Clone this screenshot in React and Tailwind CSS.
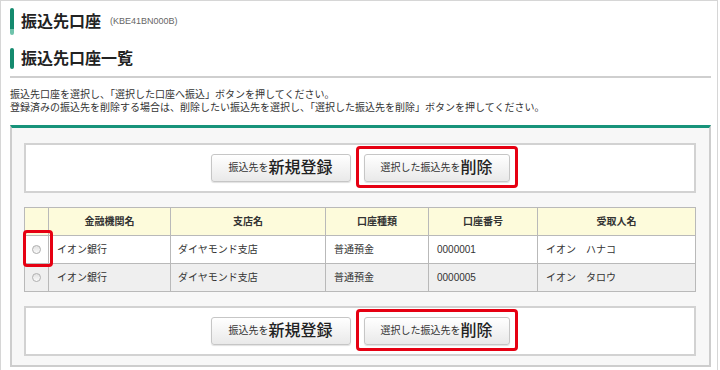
import React from "react"

const font = { fontFamily: '"Liberation Sans", "Noto Sans CJK JP", sans-serif' }

const rows = [
  { bank: "イオン銀行", branch: "ダイヤモンド支店", type: "普通預金", num: "0000001", name: "イオン　ハナコ", marked: true },
  { bank: "イオン銀行", branch: "ダイヤモンド支店", type: "普通預金", num: "0000005", name: "イオン　タロウ", marked: false },
]

const Radio = () => (
  <span className="inline-block w-[9px] h-[9px] rounded-full border border-[#b0b0b0] bg-[linear-gradient(to_bottom,#e2e2e2,#fafafa)]" />
)

const ButtonBox = () => (
  <div className="border-2 border-[#d2d2d2] bg-white h-[50px] flex items-center justify-center gap-[13px]">
    <button className="w-[140px] h-[28px] flex items-center justify-center rounded-[3px] border border-[#c6c6c6] bg-[linear-gradient(to_bottom,#ffffff,#e9e9e9)] shadow-[0_1px_1px_rgba(0,0,0,0.12)] text-[#333]">
      <span className="text-[10px] leading-none">振込先を</span>
      <span className="text-[16px] leading-none font-medium text-[#222]">新規登録</span>
    </button>
    <div className="relative">
      <button className="w-[146px] h-[28px] flex items-center justify-center rounded-[3px] border border-[#c6c6c6] bg-[linear-gradient(to_bottom,#ffffff,#e9e9e9)] shadow-[0_1px_1px_rgba(0,0,0,0.12)] text-[#333]">
        <span className="text-[10px] leading-none">選択した振込先を</span>
        <span className="text-[16px] leading-none font-medium text-[#222]">削除</span>
      </button>
      <div className="absolute -left-[8px] -right-[8px] -top-[8px] -bottom-[6px] border-[3px] border-[#e60012] rounded-[4px]" />
    </div>
  </div>
)

export default function App() {
  return (
    <div className="w-[720px] h-[370px] overflow-hidden bg-white text-[#333]" style={font}>
      <div className="w-[718px] h-[400px] border border-[#d6d6d6] pl-[9px] pr-[6px] pt-[7px]">
        {/* Page title */}
        <div className="flex items-center h-[27px]">
          <div className="w-[4px] h-[27px] rounded-[2px] bg-[linear-gradient(to_bottom,#148a6e_78%,#6fc3ab_78%)]" />
          <h1 className="ml-[7px] text-[16px] font-bold leading-none text-[#222]">振込先口座</h1>
          <span className="ml-[9px] text-[9px] text-[#666] leading-none">(KBE41BN000B)</span>
        </div>

        {/* Section title */}
        <div className="flex items-center h-[21px] mt-[13px]">
          <div className="w-[4px] h-[21px] rounded-[2px] bg-[#148a6e]" />
          <h2 className="ml-[7px] text-[16px] font-bold leading-none text-[#222]">振込先口座一覧</h2>
        </div>
        <div className="mt-[7px] h-[2px] bg-[#cfcfcf]" />

        <div className="mt-[10px] text-[10px] leading-[13px] text-[#333]">
          <p>振込先口座を選択し、「選択した口座へ振込」ボタンを押してください。</p>
          <p>登録済みの振込先を削除する場合は、削除したい振込先を選択し、「選択した振込先を削除」ボタンを押してください。</p>
        </div>

        {/* Panel */}
        <div className="mt-[11px] border-t-[3px] border-t-[#17937a] border-x-2 border-b-2 border-x-[#cdcdcd] border-b-[#cdcdcd] bg-[#f7f7f7] pl-[12px] pr-[13px] pt-[15px] pb-[9px]">
          <ButtonBox />

          <table className="mt-[14px] w-full border-collapse text-[10px] table-fixed">
            <colgroup>
              <col className="w-[24px]" />
              <col className="w-[122px]" />
              <col className="w-[155px]" />
              <col className="w-[103px]" />
              <col className="w-[109px]" />
              <col className="w-[158px]" />
            </colgroup>
            <thead>
              <tr className="h-[28px] bg-[#fdfbdb]">
                <th className="border border-[#b9b9b9]" />
                {["金融機関名", "支店名", "口座種類", "口座番号", "受取人名"].map((h) => (
                  <th key={h} className="border border-[#b9b9b9] font-bold text-center text-[#333]">
                    {h}
                  </th>
                ))}
              </tr>
            </thead>
            <tbody>
              {rows.map((r, i) => (
                <tr key={i} className={`h-[28px] ${i === 1 ? "bg-[#efefef]" : "bg-white"}`}>
                  <td className="relative border border-[#b9b9b9] text-center align-middle">
                    <div className="flex items-center justify-center">
                      <Radio />
                    </div>
                    {r.marked && (
                      <div className="absolute -left-[2px] -right-[5px] -top-[6px] -bottom-[4px] border-[3px] border-[#e60012] rounded-[4px]" />
                    )}
                  </td>
                  <td className="border border-[#b9b9b9] pl-[8px]">{r.bank}</td>
                  <td className="border border-[#b9b9b9] pl-[7px]">{r.branch}</td>
                  <td className="border border-[#b9b9b9] pl-[8px]">{r.type}</td>
                  <td className="border border-[#b9b9b9] pl-[8px]">{r.num}</td>
                  <td className="border border-[#b9b9b9] pl-[8px]">{r.name}</td>
                </tr>
              ))}
            </tbody>
          </table>

          <div className="mt-[14px]">
            <ButtonBox />
          </div>
        </div>
      </div>
    </div>
  )
}
